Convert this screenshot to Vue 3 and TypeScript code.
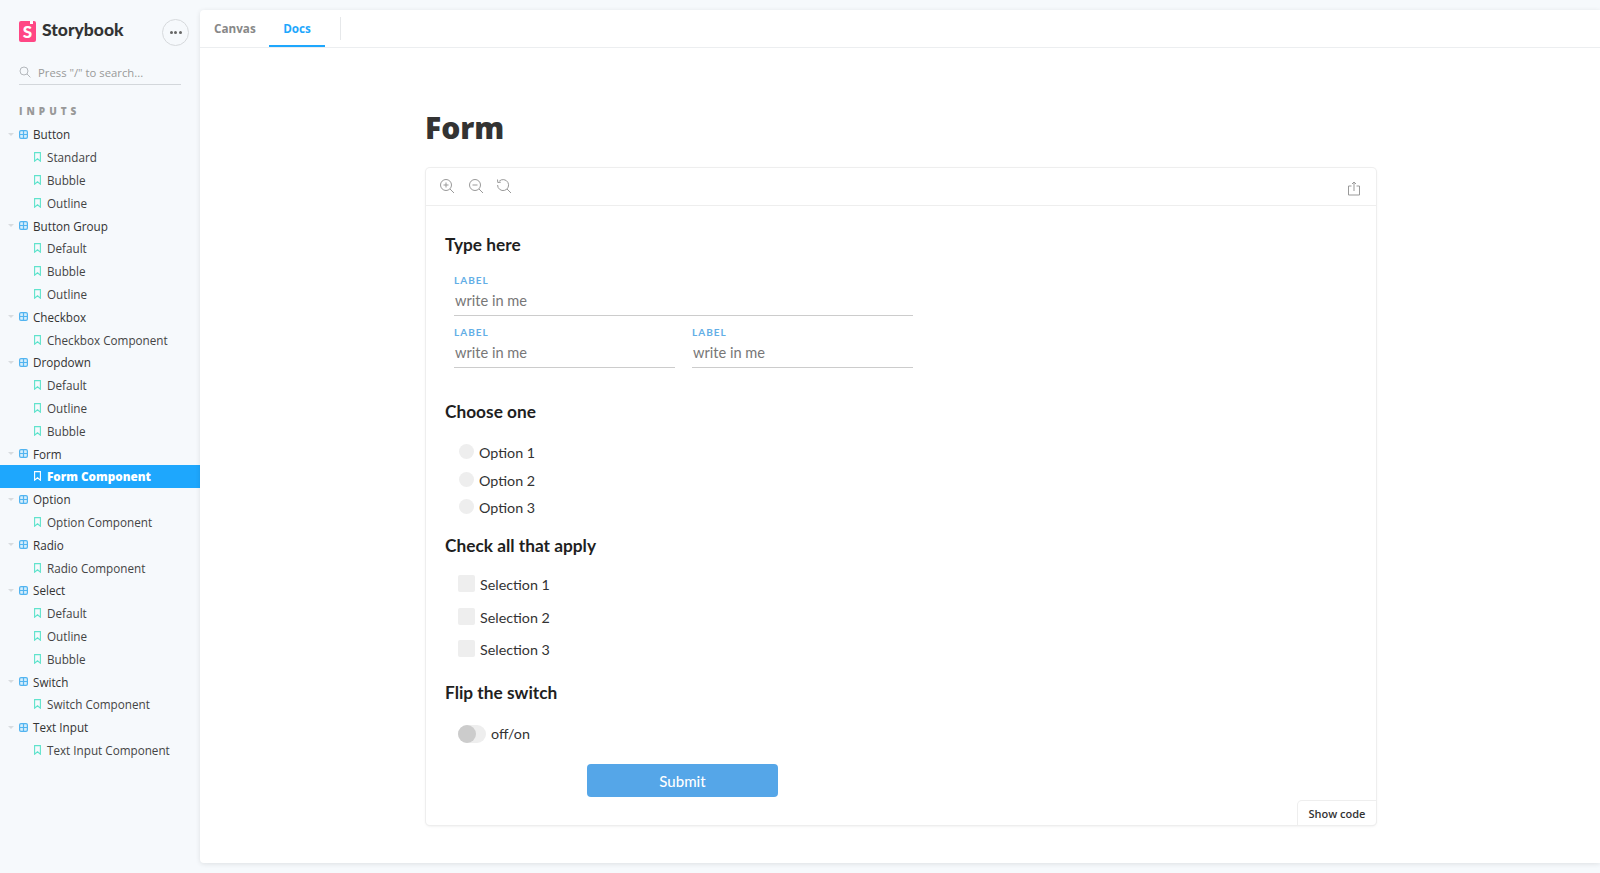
<script setup lang="ts">
interface Group {
  name: string
  stories: string[]
}

const groups: Group[] = [
  { name: 'Button', stories: ['Standard', 'Bubble', 'Outline'] },
  { name: 'Button Group', stories: ['Default', 'Bubble', 'Outline'] },
  { name: 'Checkbox', stories: ['Checkbox Component'] },
  { name: 'Dropdown', stories: ['Default', 'Outline', 'Bubble'] },
  { name: 'Form', stories: ['Form Component'] },
  { name: 'Option', stories: ['Option Component'] },
  { name: 'Radio', stories: ['Radio Component'] },
  { name: 'Select', stories: ['Default', 'Outline', 'Bubble'] },
  { name: 'Switch', stories: ['Switch Component'] },
  { name: 'Text Input', stories: ['Text Input Component'] },
]

const options = ['Option 1', 'Option 2', 'Option 3']
const selections = ['Selection 1', 'Selection 2', 'Selection 3']
</script>

<template>
  <div class="page">
    <aside class="sidebar">
      <div class="brand">
        <div class="logo"><span class="logo-s">S</span><i class="logo-notch"></i></div>
        <span class="brand-name">Storybook</span>
        <button class="menu-btn"><i></i><i></i><i></i></button>
      </div>
      <div class="search">
        <svg width="12" height="12" viewBox="0 0 12 12" fill="none" stroke="#b4b8bc" stroke-width="1">
          <circle cx="5" cy="5" r="4" />
          <path d="M8 8l3.4 3.4" />
        </svg>
        <span>Press "/" to search...</span>
      </div>
      <div class="section">INPUTS</div>
      <template v-for="group in groups" :key="group.name">
        <div class="row group-row">
          <i class="caret"></i>
          <svg class="grid-icon" width="9" height="9" viewBox="0 0 9 9" fill="none" stroke="#52b4f0" stroke-width="1.2">
            <rect x="0.6" y="0.6" width="7.8" height="7.8" rx="1.4" fill="#d5eefc" />
            <path d="M4.5 .6v7.8M.6 4.5h7.8" />
          </svg>
          <span>{{ group.name }}</span>
        </div>
        <div
          v-for="story in group.stories"
          :key="story"
          class="row story-row"
          :class="{ active: story === 'Form Component' }"
        >
          <svg class="mark" width="7" height="10" viewBox="0 0 7 10" fill="none" stroke-width="1.1">
            <path d="M.6.6h5.8v8.6L3.5 6.8.6 9.2z" />
          </svg>
          <span>{{ story }}</span>
        </div>
      </template>
    </aside>

    <main class="panel">
      <nav class="tabs">
        <span class="tab">Canvas</span>
        <span class="tab tab-on">Docs</span>
        <i class="tab-divider"></i>
      </nav>

      <div class="docs">
        <h1>Form</h1>
        <section class="card">
          <div class="toolbar">
            <svg width="16" height="16" viewBox="0 0 16 16" fill="none" stroke="#999" stroke-width="1">
              <circle cx="7" cy="7" r="5.5" />
              <path d="M11 11l4 4M7 4.5v5M4.5 7h5" />
            </svg>
            <svg width="16" height="16" viewBox="0 0 16 16" fill="none" stroke="#999" stroke-width="1">
              <circle cx="7" cy="7" r="5.5" />
              <path d="M11 11l4 4M4.5 7h5" />
            </svg>
            <svg width="16" height="16" viewBox="0 0 16 16" fill="none" stroke="#999" stroke-width="1">
              <path d="M3.2 3.2A5.5 5.5 0 1 1 1.6 7" />
              <path d="M11 11l4 4M1.5 1.5l.3 3 3-.3" />
            </svg>
            <svg class="share" width="14" height="15" viewBox="0 0 14 15" fill="none" stroke="#999" stroke-width="1">
              <path d="M4.5 5H1.5v9h11V5H9.5M7 10V1.2M5 3l2-2 2 2" />
            </svg>
          </div>

          <form class="form" @submit.prevent>
            <h3 class="first">Type here</h3>
            <div class="field wide">
              <label>LABEL</label>
              <div class="value">write in me</div>
            </div>
            <div class="field-row">
              <div class="field">
                <label>LABEL</label>
                <div class="value">write in me</div>
              </div>
              <div class="field">
                <label>LABEL</label>
                <div class="value">write in me</div>
              </div>
            </div>

            <h3 class="choose">Choose one</h3>
            <div class="radios">
              <div v-for="o in options" :key="o" class="radio"><i></i>{{ o }}</div>
            </div>

            <h3 class="check">Check all that apply</h3>
            <div class="checks">
              <div v-for="s in selections" :key="s" class="checkbox"><i></i>{{ s }}</div>
            </div>

            <h3 class="flip">Flip the switch</h3>
            <div class="switch">
              <span class="track"><i></i></span>
              off/on
            </div>

            <button class="submit" type="submit">Submit</button>
          </form>

          <div class="show-code">Show code</div>
        </section>
      </div>
    </main>
  </div>
</template>

<style>
html,
body {
  margin: 0;
  overflow: hidden;
}
</style>

<style scoped>
.page {
  display: flex;
  height: 873px;
  overflow: hidden;
  background: #f6f9fc;
  font-family: "Open Sans", "Liberation Sans", sans-serif;
}

.sidebar {
  width: 200px;
  flex: none;
}

.brand {
  display: flex;
  align-items: center;
  height: 26px;
  margin: 19px 11px 0 19px;
}

.logo {
  position: relative;
  width: 17px;
  height: 21px;
  margin-top: -2px;
  border-radius: 2px;
  background: #ff4785;
  text-align: center;
}

.logo-s {
  color: #fff;
  font: 900 17px/21px Lato, sans-serif;
}

.logo-notch {
  position: absolute;
  top: 0;
  right: 3px;
  width: 3px;
  height: 3px;
  background: #fff;
}

.brand-name {
  margin-left: 6px;
  flex: 1;
  margin-top: -4px;
  color: #333;
  font: 900 17.5px/24px Lato, sans-serif;
}

.menu-btn {
  display: flex;
  align-items: center;
  justify-content: center;
  gap: 1.5px;
  width: 27px;
  height: 27px;
  padding: 0;
  border: 1px solid #d6d9dc;
  border-radius: 50%;
  background: transparent;
}

.menu-btn i {
  width: 3px;
  height: 3px;
  border-radius: 50%;
  background: #666;
}

.search {
  display: flex;
  align-items: center;
  gap: 7px;
  width: 162px;
  height: 24px;
  margin: 15px 0 0 19px;
  border-bottom: 1px solid #d3d7db;
  color: #999;
  font-size: 11.3px;
}

.section {
  margin: 20px 0 5px 19px;
  height: 13px;
  color: #999;
  font-size: 10px;
  font-weight: 800;
  line-height: 13px;
  letter-spacing: 4px;
}

.row {
  display: flex;
  align-items: center;
  height: 22.8px;
  color: #333;
  font-size: 11.7px;
  white-space: nowrap;
}

.group-row {
  padding-left: 8px;
}

.caret {
  width: 0;
  height: 0;
  margin-right: 5px;
  border: 3px solid transparent;
  border-top: 3px solid #d8dcdf;
  border-bottom: 0;
}

.grid-icon {
  margin-right: 5px;
}

.story-row {
  padding-left: 34px;
  color: #444;
}

.mark {
  margin-right: 6px;
  stroke: #5fe3cc;
}

.active {
  background: #1ea7fd;
  color: #fff;
  font-weight: 800;
}

.active .mark {
  stroke: #fff;
}

.panel {
  flex: 1;
  height: 853px;
  margin-top: 10px;
  border-top-left-radius: 4px;
  border-bottom-left-radius: 4px;
  background: #fff;
  box-shadow: 0 1px 5px rgba(0, 0, 0, 0.1);
}

.tabs {
  display: flex;
  align-items: center;
  height: 37px;
  padding-left: 0;
  border-bottom: 1px solid #eceef0;
}

.tab {
  display: flex;
  align-items: center;
  height: 37px;
  padding: 0 14px 2px;
  box-sizing: border-box;
  color: #888;
  font-size: 11.7px;
  font-weight: 700;
}

.tab:first-child {
  width: 69px;
}

.tab-on {
  width: 56px;
  justify-content: center;
  padding-bottom: 0;
  border-bottom: 2px solid #1ea7fd;
  color: #1ea7fd;
}

.tab-divider {
  width: 1px;
  height: 23px;
  margin-left: 15px;
  background: #e6e8ea;
}

.docs {
  width: 950px;
  margin-left: 226px;
}

h1 {
  margin: 0 0 0 -1px;
  padding-top: 60px;
  height: 60px;
  color: #333;
  font: 800 30px/40px "Open Sans", sans-serif;
}

.card {
  position: relative;
  height: 657px;
  border-radius: 4px;
  background: #fff;
  box-shadow: 0 0 0 1px #eeeeee, 0 1px 3px rgba(0, 0, 0, 0.1);
}

.toolbar {
  display: flex;
  align-items: center;
  gap: 12.5px;
  height: 37.5px;
  padding: 0 7px 0 13px;
  box-sizing: border-box;
  border-bottom: 1px solid #eee;
}

.share {
  margin-left: auto;
  margin-right: 8px;
  margin-top: 5px;
}

.form {
  padding-left: 19px;
  color: #333;
  font-family: Lato, "Open Sans", sans-serif;
}

h3 {
  margin: 0;
  color: #1f1f1f;
  font-size: 17.3px;
  font-weight: 700;
  line-height: 24px;
}

.first {
  margin-top: 27px;
}

.field {
  flex: 1;
  border-bottom: 1px solid #ccc;
  height: 43px;
}

.wide {
  width: 459px;
  margin: 15.5px 0 0 9px;
}

.field-row {
  display: flex;
  gap: 17px;
  width: 459px;
  margin: 7.5px 0 0 9px;
}

label {
  display: block;
  height: 16px;
  color: #62aee6;
  font-size: 10px;
  font-weight: 700;
  line-height: 16px;
  letter-spacing: 1px;
}

.value {
  padding-left: 1px;
  margin-top: 1px;
  color: #777;
  font-size: 14.6px;
  line-height: 24px;
}

.choose {
  margin-top: 32.5px;
}

.radios {
  margin: 15px 0 0 14px;
}

.radio {
  display: flex;
  align-items: center;
  gap: 5px;
  height: 27.5px;
  font-size: 14.3px;
}

.radio i {
  width: 15px;
  height: 15px;
  border-radius: 50%;
  background: #eee;
  margin-top: -2px;
}

.check {
  margin-top: 12px;
}

.checks {
  margin: 11px 0 0 13px;
}

.checkbox {
  display: flex;
  align-items: center;
  gap: 5px;
  height: 32.4px;
  font-size: 14.3px;
}

.checkbox i {
  width: 17px;
  height: 17px;
  border-radius: 2px;
  background: #eee;
  margin-top: -2px;
}

.flip {
  margin-top: 15px;
}

.switch {
  display: flex;
  align-items: center;
  gap: 5px;
  height: 18px;
  margin: 20px 0 0 13px;
  font-size: 14.3px;
}

.track {
  width: 28px;
  height: 18px;
  border-radius: 9px;
  background: #eee;
}

.track i {
  display: block;
  width: 18px;
  height: 18px;
  border-radius: 50%;
  background: #ccc;
}

.submit {
  display: block;
  width: 191px;
  height: 33px;
  margin: 21.5px 0 0 142px;
  border: 0;
  border-radius: 4px;
  background: #55a6e8;
  color: #fff;
  font: 500 15px Lato, sans-serif;
}

.show-code {
  position: absolute;
  right: 0;
  bottom: 0;
  width: 78px;
  height: 24px;
  border-radius: 4px 0 4px 0;
  box-shadow: 0 0 0 1px #eee;
  background: #fff;
  color: #333;
  font-size: 11px;
  font-weight: 600;
  line-height: 25px;
  text-align: center;
}
</style>
